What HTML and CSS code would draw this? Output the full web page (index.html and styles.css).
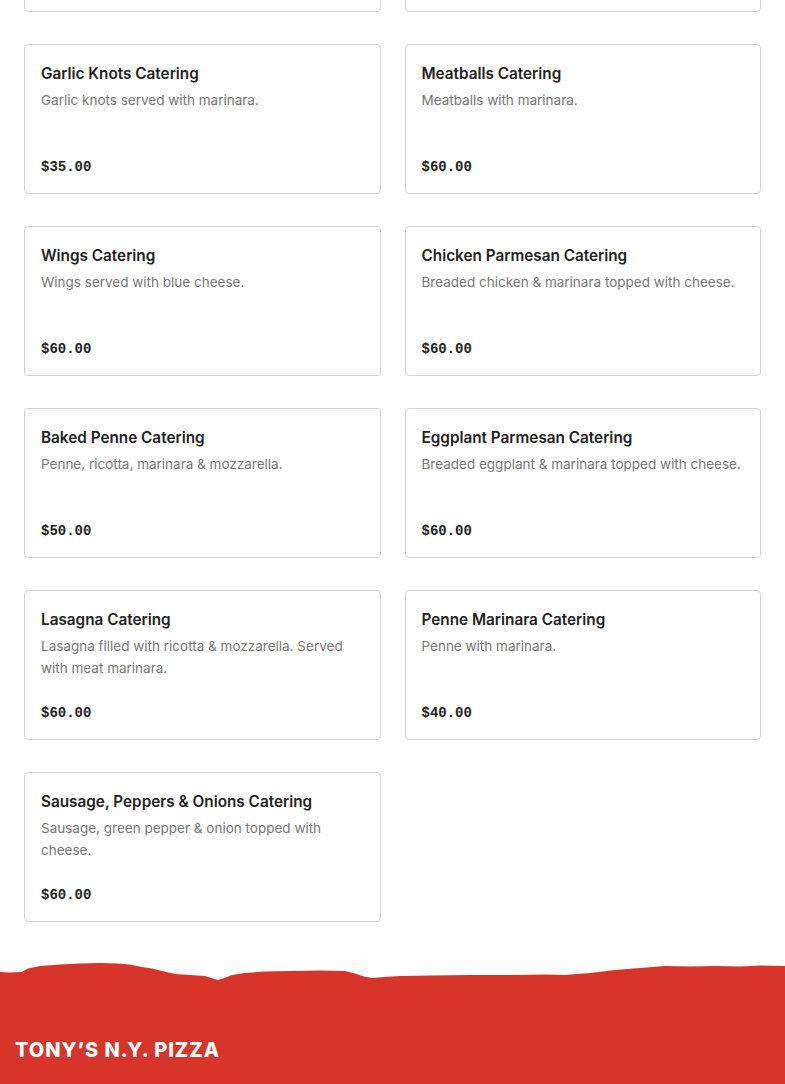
FILE: index.html
```html
<!DOCTYPE html>
<html lang="en">
<head>
<meta charset="utf-8">
<title>Catering Menu</title>
<link rel="stylesheet" href="styles.css">
</head>
<body>
<main class="menu">
  <div class="grid">
    <div class="card card-prev" aria-hidden="true"></div>
    <div class="card card-prev" aria-hidden="true"></div>
    <article class="card"><h3 class="title">Garlic Knots Catering</h3><p class="desc">Garlic knots served with marinara.</p><p class="price">$35.00</p></article>
    <article class="card"><h3 class="title">Meatballs Catering</h3><p class="desc">Meatballs with marinara.</p><p class="price">$60.00</p></article>
    <article class="card"><h3 class="title">Wings Catering</h3><p class="desc">Wings served with blue cheese.</p><p class="price">$60.00</p></article>
    <article class="card"><h3 class="title">Chicken Parmesan Catering</h3><p class="desc">Breaded chicken &amp; marinara topped with cheese.</p><p class="price">$60.00</p></article>
    <article class="card"><h3 class="title">Baked Penne Catering</h3><p class="desc">Penne, ricotta, marinara &amp; mozzarella.</p><p class="price">$50.00</p></article>
    <article class="card"><h3 class="title">Eggplant Parmesan Catering</h3><p class="desc">Breaded eggplant &amp; marinara topped with cheese.</p><p class="price">$60.00</p></article>
    <article class="card"><h3 class="title">Lasagna Catering</h3><p class="desc">Lasagna filled with ricotta &amp; mozzarella. Served with meat marinara.</p><p class="price">$60.00</p></article>
    <article class="card"><h3 class="title">Penne Marinara Catering</h3><p class="desc">Penne with marinara.</p><p class="price">$40.00</p></article>
    <article class="card"><h3 class="title">Sausage, Peppers &amp; Onions Catering</h3><p class="desc">Sausage, green pepper &amp; onion topped with cheese.</p><p class="price">$60.00</p></article>
  </div>
</main>
<footer class="footer">
  <svg class="torn" viewBox="0 0 785 32" preserveAspectRatio="none" aria-hidden="true">
    <path fill="#d8352a" d="M0 17 L10 17.5 L22 17 L28 13.5 L40 11 L60 9.5 L80 8.5 L100 8 L118 8.5 L130 9.5 L142 12 L152 13.5 L162 16 L175 19 L190 20 L205 21 L213 23.5 L218 25 L223 23.5 L232 20 L245 18 L265 16.5 L290 16 L320 15.5 L345 16 L355 18.5 L364 21.5 L372 23 L384 22 L400 21 L430 20.5 L470 20 L510 20 L545 19.5 L565 20 L590 18 L615 15 L640 13 L665 11 L690 11.5 L715 11 L740 11.5 L760 10.5 L785 11 L785 32 L0 32 Z"/>
  </svg>
  <div class="footer-body">
    <p class="brand">TONY’S N.Y. PIZZA</p>
  </div>
</footer>
</body>
</html>
```
FILE: styles.css
```css
* { box-sizing: border-box; }
html, body { margin: 0; padding: 0; background: #fff; }
body { font-family: "Inter", "Liberation Sans", Arial, sans-serif; overflow: hidden; }

.menu { padding: 0 24px 33px; }

.grid {
  display: grid;
  grid-template-columns: 1fr 1fr;
  column-gap: 24px;
  row-gap: 32px;
  margin-top: -138px;
}

.card {
  border: 1px solid #d3d3d3;
  border-radius: 4px;
  padding: 17px 16px 15px;
  display: flex;
  flex-direction: column;
  background: #fff;
}

.card-prev { height: 150px; }

.title {
  margin: 0;
  font-family: "Inter", "Liberation Sans", sans-serif;
  font-size: 15.3px;
  font-weight: 600;
  line-height: 24px;
  color: #222;
}

.desc {
  margin: 3px 0 0;
  min-height: 44px;
  font-family: "Inter", "Liberation Sans", sans-serif;
  font-size: 13.5px;
  line-height: 22px;
  color: #767676;
}

.price {
  margin: 23px 0 0;
  font-family: "Liberation Mono", monospace;
  font-size: 14px;
  font-weight: 700;
  line-height: 22px;
  color: #222;
}

.footer { display: flex; flex-direction: column; }
.torn { display: block; width: 100%; height: 32px; }
.footer-body {
  background: #d8352a;
  height: 200px;
  padding: 51px 15px 0;
}
.brand {
  margin: 0;
  color: #fff;
  font-family: "Inter", "Liberation Sans", Arial, sans-serif;
  font-weight: 800;
  font-size: 20px;
  letter-spacing: 0.95px;
  line-height: 24px;
}
```
